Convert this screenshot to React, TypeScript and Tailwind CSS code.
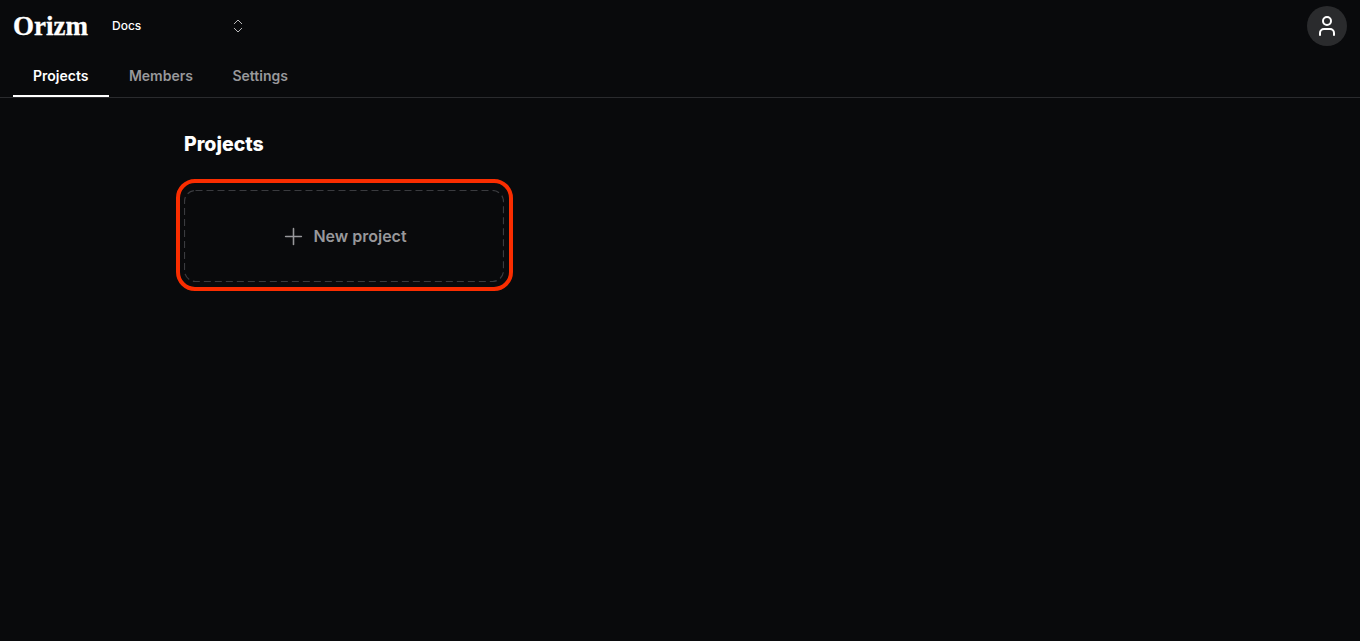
import { ChevronsUpDown, Plus, User } from 'lucide-react'

const tabs = [
  { label: 'Projects', className: 'pl-5 pr-[20.5px] border-white' },
  { label: 'Members', className: 'pl-5 pr-[19.5px] text-[#98989b] border-transparent' },
  { label: 'Settings', className: 'px-5 text-[#98989b] border-transparent' },
]

export default function App() {
  return (
    <div className="h-[641px] bg-[#090a0c] font-['Inter',sans-serif] text-white overflow-hidden">
      <header className="border-b border-[#2a2b2e]">
        <div className="flex items-center justify-between h-[52px] px-[13px]">
          <div className="flex items-center">
            <span className="w-[99px] font-['Liberation_Serif',serif] font-bold text-[27px] leading-none [-webkit-text-stroke:0.3px_white]">
              Orizm
            </span>
            <div className="flex items-center justify-between w-[135px]">
              <span className="text-[12px] font-medium">Docs</span>
              <ChevronsUpDown size={18} strokeWidth={1.25} className="text-[#c4c4c6]" />
            </div>
          </div>
          <div className="flex items-center justify-center size-10 rounded-full bg-[#2a2b2d]">
            <User size={24} strokeWidth={2} />
          </div>
        </div>
        <nav className="flex pl-[13px] h-[45px]">
          {tabs.map((tab) => (
            <div
              key={tab.label}
              className={`flex items-center pt-[3px] text-[14px] font-semibold border-b-2 ${tab.className}`}
            >
              {tab.label}
            </div>
          ))}
        </nav>
      </header>
      <main className="pl-[184px] pt-[32px]">
        <h1 className="text-[19.5px] leading-7 font-extrabold">Projects</h1>
        <div className="relative mt-[32px] w-[320px] h-[92px]">
          <button className="flex items-center justify-center gap-[6px] pr-px w-full h-full text-[#98989b]">
            <Plus size={27} strokeWidth={1.4} />
            <span className="text-[16px] font-semibold">New project</span>
          </button>
          <svg className="absolute inset-0 pointer-events-none" width="320" height="92" fill="none">
            <rect x="0.5" y="0.5" width="319" height="91" rx="11" stroke="#3a3b3f" strokeWidth="1.2" strokeDasharray="7 4" />
          </svg>
          <div className="absolute -left-2 -right-[9px] -top-[11px] -bottom-[9px] rounded-[19px] border-4 border-[#fa2d00] pointer-events-none" />
        </div>
      </main>
    </div>
  )
}
